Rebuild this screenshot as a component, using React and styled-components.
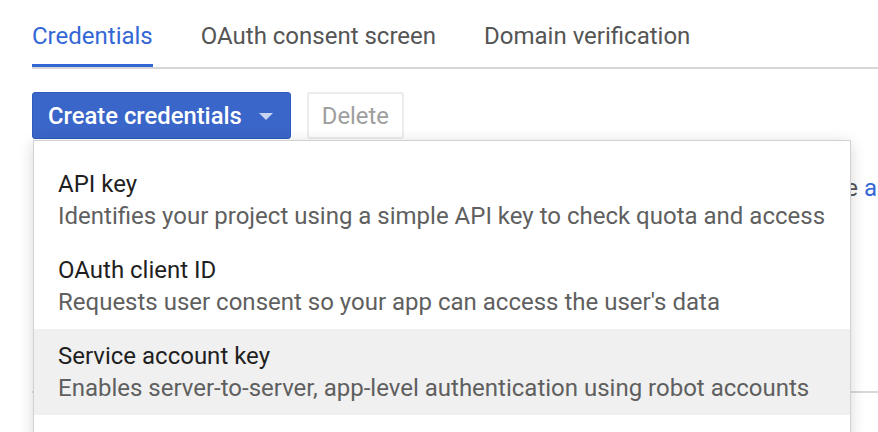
import React from 'react';
import styled, { createGlobalStyle } from 'styled-components';

const GlobalStyle = createGlobalStyle`
  html, body {
    margin: 0;
    padding: 0;
    background: #fff;
    overflow: hidden;
  }
  body {
    font-family: Roboto, "Noto Sans", "Liberation Sans", sans-serif;
    -webkit-font-smoothing: antialiased;
  }
`;

const Page = styled.div`
  width: 878px;
  height: 432px;
  padding-left: 32px;
  box-sizing: border-box;
  overflow: hidden;
`;

const TabBar = styled.nav`
  display: flex;
  gap: 48px;
  border-bottom: 2px solid #d6d6d6;
  margin-right: -40px;
`;

const Tab = styled.div`
  padding: 20px 0 12px;
  font-size: 24px;
  line-height: 32px;
  color: ${props => (props.active ? '#3367d6' : '#555')};
  border-bottom: 3px solid ${props => (props.active ? '#3367d6' : 'transparent')};
  white-space: nowrap;
`;

const Toolbar = styled.div`
  position: relative;
  display: flex;
  align-items: center;
  gap: 16px;
  margin-top: 23px;
`;

const PrimaryButton = styled.button`
  display: flex;
  align-items: center;
  gap: 17px;
  height: 47px;
  padding: 0 17px 0 15px;
  background: #3a66c9;
  border: 1px solid #2f5bbf;
  border-radius: 3px;
  color: #fff;
  font-family: inherit;
  font-size: 23.8px;
  font-weight: 500;
`;

const Caret = styled.span`
  width: 0;
  height: 0;
  border-left: 7px solid transparent;
  border-right: 7px solid transparent;
  border-top: 7px solid #c9d5f0;
  margin-top: 2px;
`;

const GhostButton = styled.button`
  height: 47px;
  padding: 0 13px;
  background: #fff;
  border: 2px solid #ececec;
  border-radius: 3px;
  color: #9e9e9e;
  font-family: inherit;
  font-size: 23.8px;
`;

const Menu = styled.div`
  position: absolute;
  top: 48px;
  left: 1px;
  width: 818px;
  box-sizing: border-box;
  background: #fff;
  border: 1px solid #d2d2d2;
  padding: 16px 0 24px;
  box-shadow: 0 3px 14px rgba(0, 0, 0, 0.16);
  z-index: 2;
`;

const MenuItem = styled.div`
  padding: 11px 24px 11px;
  background: ${props => (props.highlighted ? '#f0f0f0' : 'transparent')};
`;

const ItemTitle = styled.div`
  font-size: 24px;
  line-height: 32px;
  color: #1f1f1f;
  white-space: nowrap;
`;

const ItemDescription = styled.div`
  font-size: 24px;
  line-height: 32px;
  color: #5f5f5f;
  white-space: nowrap;
`;

const Notice = styled.div`
  display: flex;
  margin-top: 33px;
  font-size: 24px;
  line-height: 32px;
  color: #555;
  white-space: nowrap;
`;

const NoticeText = styled.div`
  flex: 0 0 826px;
  display: flex;
  justify-content: flex-end;
  overflow: hidden;
`;

const NoticeLink = styled.a`
  margin-left: 6px;
  color: #3367d6;
  text-decoration: none;
`;

const TableHead = styled.div`
  margin-top: 59px;
  margin-right: -40px;
  height: 128px;
  border-bottom: 2px solid #d8d8d8;
`;

const menuItems = [
  {
    title: 'API key',
    description: 'Identifies your project using a simple API key to check quota and access',
  },
  {
    title: 'OAuth client ID',
    description: "Requests user consent so your app can access the user's data",
  },
  {
    title: 'Service account key',
    description: 'Enables server-to-server, app-level authentication using robot accounts',
    highlighted: true,
  },
];

const App = () => (
  <>
    <GlobalStyle />
    <Page>
      <TabBar>
        <Tab active>Credentials</Tab>
        <Tab>OAuth consent screen</Tab>
        <Tab>Domain verification</Tab>
      </TabBar>

      <Toolbar>
        <PrimaryButton>
          Create credentials
          <Caret />
        </PrimaryButton>
        <GhostButton disabled>Delete</GhostButton>

        <Menu>
          {menuItems.map(item => (
            <MenuItem key={item.title} highlighted={item.highlighted}>
              <ItemTitle>{item.title}</ItemTitle>
              <ItemDescription>{item.description}</ItemDescription>
            </MenuItem>
          ))}
        </Menu>
      </Toolbar>

      <Notice>
        <NoticeText>Create credentials to access your enabled APIs. Learn more about the</NoticeText>
        <NoticeLink href="#">authentication docs</NoticeLink>
      </Notice>

      <TableHead />
    </Page>
  </>
);

export default App;
